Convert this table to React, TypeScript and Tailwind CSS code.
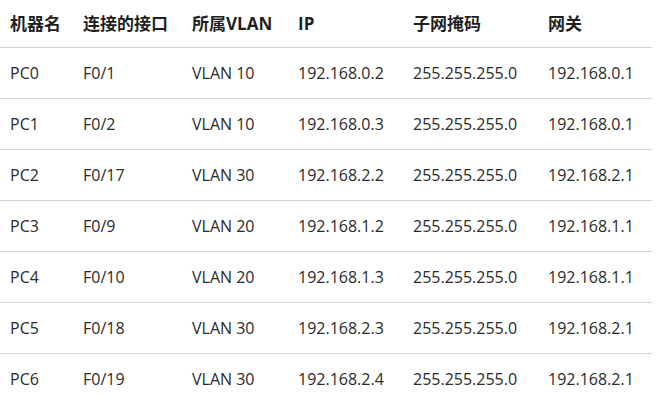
import React from 'react';

const HEADERS = ['机器名', '连接的接口', '所属VLAN', 'IP', '子网掩码', '网关'];

const ROWS = [
  ['PC0', 'F0/1', 'VLAN 10', '192.168.0.2', '255.255.255.0', '192.168.0.1'],
  ['PC1', 'F0/2', 'VLAN 10', '192.168.0.3', '255.255.255.0', '192.168.0.1'],
  ['PC2', 'F0/17', 'VLAN 30', '192.168.2.2', '255.255.255.0', '192.168.2.1'],
  ['PC3', 'F0/9', 'VLAN 20', '192.168.1.2', '255.255.255.0', '192.168.1.1'],
  ['PC4', 'F0/10', 'VLAN 20', '192.168.1.3', '255.255.255.0', '192.168.1.1'],
  ['PC5', 'F0/18', 'VLAN 30', '192.168.2.3', '255.255.255.0', '192.168.2.1'],
  ['PC6', 'F0/19', 'VLAN 30', '192.168.2.4', '255.255.255.0', '192.168.2.1'],
];

export default function App() {
  return (
    <div className="w-[667px] h-[400px] overflow-hidden bg-white font-['Open_Sans','Noto_Sans_CJK_SC',sans-serif]">
      <table className="w-[652px] table-fixed border-collapse">
        <colgroup>
          <col className="w-[73px]" />
          <col className="w-[109px]" />
          <col className="w-[106px]" />
          <col className="w-[115px]" />
          <col className="w-[135px]" />
          <col className="w-[114px]" />
        </colgroup>
        <thead>
          <tr className="border-b border-[#d4d4d4]">
            {HEADERS.map((h) => (
              <th
                key={h}
                className="h-[47px] pl-[10px] p-0 text-left align-middle text-[17px] font-bold text-[#1f1f1f] whitespace-nowrap"
              >
                {h}
              </th>
            ))}
          </tr>
        </thead>
        <tbody>
          {ROWS.map((row) => (
            <tr key={row[0]} className="border-b border-[#d4d4d4]">
              {row.map((cell, i) => (
                <td
                  key={i}
                  className="h-[51px] p-0 pl-[10px] align-middle text-[16px] text-[#2b2b2b] whitespace-nowrap"
                >
                  {cell}
                </td>
              ))}
            </tr>
          ))}
        </tbody>
      </table>
    </div>
  );
}
